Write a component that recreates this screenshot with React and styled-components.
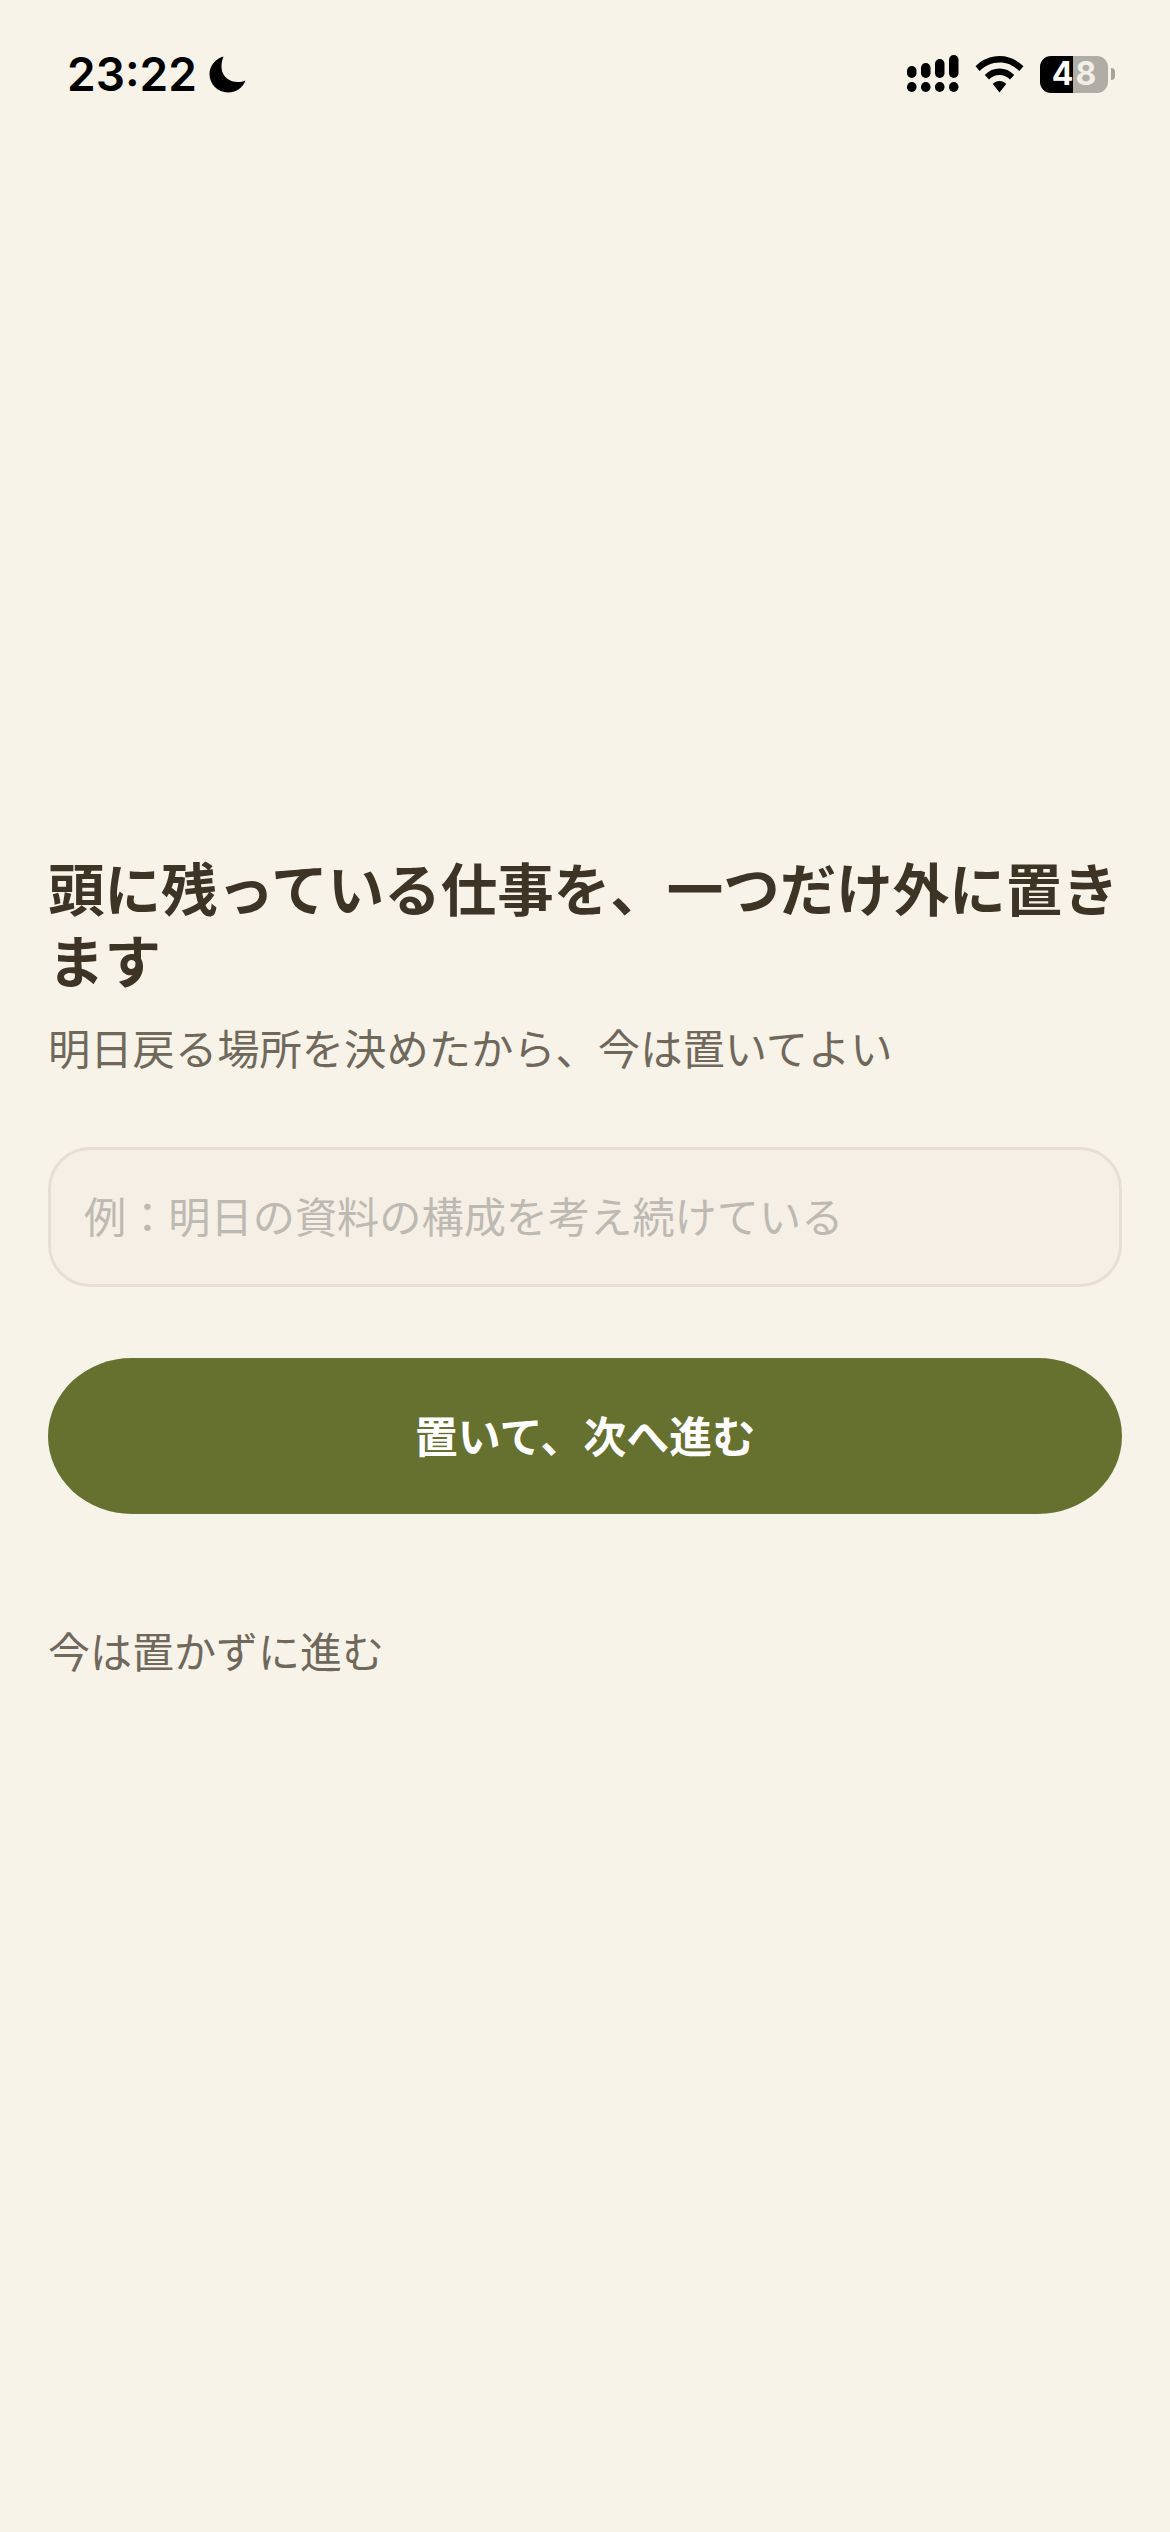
import React from 'react'
import styled, { createGlobalStyle } from 'styled-components'

const GlobalStyle = createGlobalStyle`
  html, body {
    margin: 0;
    padding: 0;
    background: #f8f3e9;
  }
  * {
    box-sizing: border-box;
  }
`

const JP = `"Noto Sans CJK JP", "Noto Sans", sans-serif`

export default function App() {
  return (
    <>
      <GlobalStyle />
      <Page>
        <StatusBar>
          <TimeGroup>
            <Time>23:22</Time>
            <svg width="37" height="37" viewBox="0 0 37 37">
              <path d="M14.5 0.5C11 9 12 18 18 22.5C23 26.5 30.5 27 36.5 24.5C33.5 32.5 26.5 36.5 19 36.5C8.5 36.5 0.5 28 0.5 18C0.5 10 6.5 2.5 14.5 0.5Z" fill="#000" />
            </svg>
          </TimeGroup>
          <StatusIcons>
            <svg width="52" height="38" viewBox="0 0 52 38">
              <rect x="0" y="11" width="9.5" height="12" rx="4.7" />
              <rect x="14" y="8" width="9.5" height="15" rx="4.7" />
              <rect x="28" y="4" width="9.5" height="19" rx="4.7" />
              <rect x="42" y="0" width="9.5" height="23" rx="4.7" />
              <rect x="0" y="27" width="9.5" height="10" rx="4.7" />
              <rect x="14" y="27" width="9.5" height="10" rx="4.7" />
              <rect x="28" y="27" width="9.5" height="10" rx="4.7" />
              <rect x="42" y="27" width="9.5" height="10" rx="4.7" />
            </svg>
            <svg width="49" height="37" viewBox="0 0 49 37">
              <path d="M24.5 0C33.5 0 42 3.6 48.5 10.3L44.3 15C39 9.4 32 6.4 24.5 6.4C17 6.4 10 9.4 4.7 15L0.5 10.3C7 3.6 15.5 0 24.5 0Z" />
              <path d="M24.5 12.5C30 12.5 35.2 14.7 39.2 18.9L35 23.5C32.2 20.6 28.5 19 24.5 19C20.5 19 16.8 20.6 14 23.5L9.8 18.9C13.8 14.7 19 12.5 24.5 12.5Z" />
              <path d="M24.5 25C27 25 29.4 26 31.2 27.9L24.5 36.5L17.8 27.9C19.6 26 22 25 24.5 25Z" />
            </svg>
            <BatteryWrap>
              <Battery>
                <BatteryDigit>4</BatteryDigit>
                <BatteryDigit $dim>8</BatteryDigit>
              </Battery>
              <BatteryCap />
            </BatteryWrap>
          </StatusIcons>
        </StatusBar>
        <Main>
          <Title>頭に残っている仕事を、一つだけ外に置きます</Title>
          <Subtitle>明日戻る場所を決めたから、今は置いてよい</Subtitle>
          <Field placeholder={'例\uFF1A明日の資料の構成を考え続けている'} />
          <PrimaryButton>置いて、次へ進む</PrimaryButton>
          <SkipLink>今は置かずに進む</SkipLink>
        </Main>
      </Page>
    </>
  )
}

const Page = styled.div`
  min-height: 2532px;
  display: flex;
  flex-direction: column;
  background: #f8f3e9;
`

const StatusBar = styled.div`
  height: 150px;
  padding: 55px 55px 0 67px;
  display: flex;
  justify-content: space-between;
  align-items: flex-start;
`

const TimeGroup = styled.div`
  display: flex;
  align-items: center;
  gap: 12px;
  height: 38px;
`

const Time = styled.span`
  font-family: Inter, "Liberation Sans", sans-serif;
  font-size: 46px;
  font-weight: 600;
  line-height: 38px;
  color: #000;
`

const StatusIcons = styled.div`
  display: flex;
  align-items: center;
  gap: 16px;
  height: 38px;
`

const BatteryWrap = styled.div`
  display: flex;
  align-items: center;
  gap: 3px;
`

const Battery = styled.div`
  width: 68px;
  height: 37px;
  border-radius: 11px;
  background: linear-gradient(to right, #000 0 33px, #afada6 33px 100%);
  display: flex;
  justify-content: center;
  align-items: center;
  gap: 2px;
  font-family: Inter, "Liberation Sans", sans-serif;
  font-size: 32px;
  font-weight: 700;
  line-height: 1;
`

const BatteryDigit = styled.span`
  color: ${(p) => (p.$dim ? '#f1eee6' : '#fff')};
`

const BatteryCap = styled.div`
  width: 4px;
  height: 12px;
  background: #a5a39c;
  border-radius: 0 6px 6px 0;
`

const Main = styled.main`
  padding: 700px 48px 0;
  display: flex;
  flex-direction: column;
  font-family: ${JP};
`

const Title = styled.h1`
  margin: 0;
  font-size: 56.5px;
  line-height: 72px;
  font-weight: 700;
  color: #3d3426;
`

const Subtitle = styled.p`
  margin: 23px 0 0;
  font-size: 42.3px;
  line-height: 60px;
  font-weight: 400;
  color: #6f685b;
`

const Field = styled.input`
  margin-top: 70px;
  height: 140px;
  padding: 0 33px 5px;
  background: #f6efe5;
  border: 3px solid #e8dfd4;
  border-radius: 42px;
  font-family: ${JP};
  font-size: 42.2px;
  color: #3d3426;
  outline: none;
  &::placeholder {
    color: #bdb9b3;
    opacity: 1;
  }
`

const PrimaryButton = styled.button`
  margin-top: 71px;
  height: 156px;
  padding: 0 0 5px;
  border: none;
  background: #66702f;
  border-radius: 84px / 78px;
  font-family: ${JP};
  font-size: 43px;
  font-weight: 700;
  color: #fff;
`

const SkipLink = styled.button`
  margin-top: 106px;
  padding: 0;
  border: none;
  background: none;
  align-self: flex-start;
  font-family: ${JP};
  font-size: 42px;
  line-height: 60px;
  color: #6f685b;
`
